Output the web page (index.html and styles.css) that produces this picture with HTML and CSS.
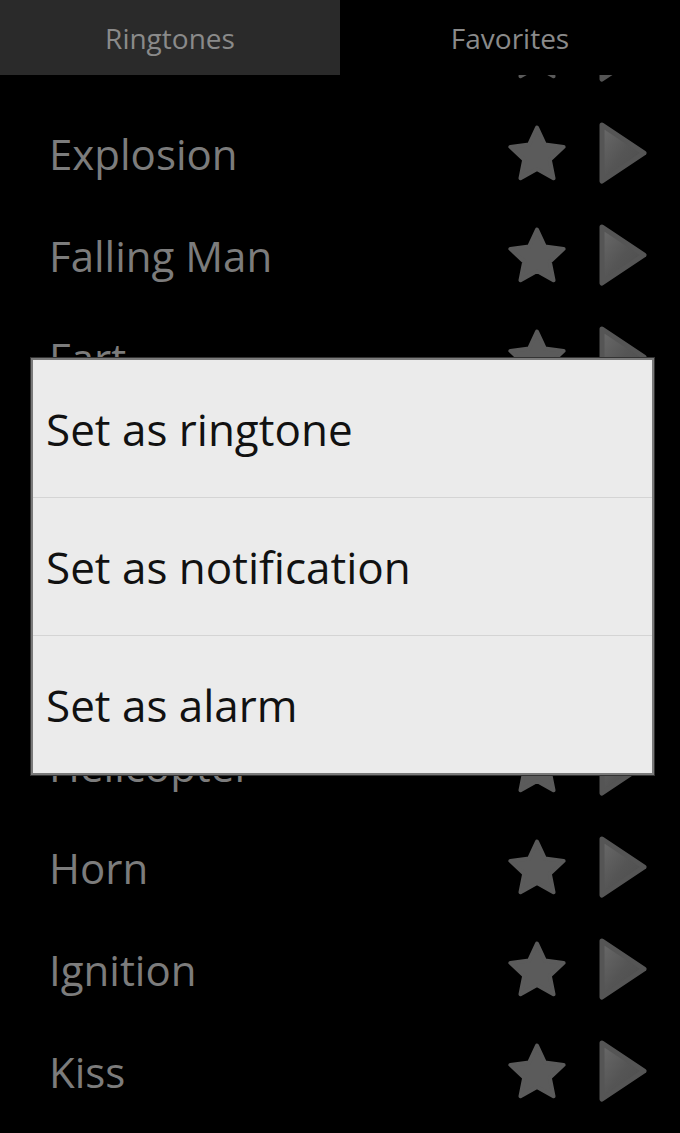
FILE: index.html
```html
<!DOCTYPE html>
<html lang="en">
<head>
  <meta charset="UTF-8" />
  <meta name="viewport" content="width=device-width, initial-scale=1.0"/>
  <title>Ringtones</title>
  <link rel="stylesheet" href="styles.css">
</head>
<body>

  <svg width="0" height="0" class="defs">
    <defs>
      <linearGradient id="playGrad" x1="0" y1="0" x2="1" y2="1">
        <stop offset="0" stop-color="#6a6a6a"/>
        <stop offset="0.5" stop-color="#555"/>
        <stop offset="1" stop-color="#4c4c4c"/>
      </linearGradient>
      <symbol id="star" viewBox="0 0 60 56">
        <polygon points="30,2.5 37.9,19.6 56.6,21.9 42.8,34.7 46.5,53.2 30,44 13.5,53.2 17.2,34.7 3.4,21.9 22.1,19.6"
          fill="#5b5b5b" stroke="#5b5b5b" stroke-width="4" stroke-linejoin="round"/>
      </symbol>
      <symbol id="play" viewBox="0 0 50 64">
        <polygon points="4,4 46,32 4,60" fill="url(#playGrad)" stroke="#555" stroke-width="5" stroke-linejoin="round"/>
      </symbol>
    </defs>
  </svg>

  <div class="tabs">
    <div class="tab active">Ringtones</div>
    <div class="tab">Favorites</div>
  </div>

  <div class="list-view">
    <ul class="list">
      <li class="row"><span class="name">Drums</span><span class="actions"><svg class="star"><use href="#star"/></svg><svg class="play"><use href="#play"/></svg></span></li>
      <li class="row"><span class="name">Explosion</span><span class="actions"><svg class="star"><use href="#star"/></svg><svg class="play"><use href="#play"/></svg></span></li>
      <li class="row"><span class="name">Falling Man</span><span class="actions"><svg class="star"><use href="#star"/></svg><svg class="play"><use href="#play"/></svg></span></li>
      <li class="row"><span class="name">Fart</span><span class="actions"><svg class="star"><use href="#star"/></svg><svg class="play"><use href="#play"/></svg></span></li>
      <li class="row"><span class="name">Glass</span><span class="actions"><svg class="star"><use href="#star"/></svg><svg class="play"><use href="#play"/></svg></span></li>
      <li class="row"><span class="name">Gunshot</span><span class="actions"><svg class="star"><use href="#star"/></svg><svg class="play"><use href="#play"/></svg></span></li>
      <li class="row"><span class="name">Hammer</span><span class="actions"><svg class="star"><use href="#star"/></svg><svg class="play"><use href="#play"/></svg></span></li>
      <li class="row"><span class="name">Helicopter</span><span class="actions"><svg class="star"><use href="#star"/></svg><svg class="play"><use href="#play"/></svg></span></li>
      <li class="row"><span class="name">Horn</span><span class="actions"><svg class="star"><use href="#star"/></svg><svg class="play"><use href="#play"/></svg></span></li>
      <li class="row"><span class="name">Ignition</span><span class="actions"><svg class="star"><use href="#star"/></svg><svg class="play"><use href="#play"/></svg></span></li>
      <li class="row"><span class="name">Kiss</span><span class="actions"><svg class="star"><use href="#star"/></svg><svg class="play"><use href="#play"/></svg></span></li>
    </ul>
  </div>

  <div class="menu">
    <div class="menu-item">Set as ringtone</div>
    <div class="menu-item">Set as notification</div>
    <div class="menu-item">Set as alarm</div>
  </div>

</body>
</html>
```

FILE: styles.css
```css
body {
  margin: 0;
  padding: 0;
  background-color: #000;
  font-family: "Open Sans", "DejaVu Sans", sans-serif;
  height: 1133px;
  overflow: hidden;
  position: relative;
}

.defs {
  position: absolute;
}

.tabs {
  display: flex;
  height: 75px;
}

.tab {
  flex: 1;
  display: flex;
  align-items: center;
  justify-content: center;
  color: #8a8a8a;
  font-size: 28px;
  background-color: #000;
}

.tab.active {
  background-color: #2a2a2a;
}

.list-view {
  height: 1058px;
  overflow: hidden;
}

.list {
  list-style: none;
  margin: -75px 0 0 0;
  padding: 0;
}

.row {
  height: 102px;
  display: flex;
  align-items: center;
  justify-content: space-between;
  padding: 0 32px 0 49px;
}

.name {
  color: #7c7c7c;
  font-size: 42px;
}

.actions {
  display: flex;
  align-items: center;
  gap: 31px;
}

.star {
  width: 60px;
  height: 56px;
}

.play {
  width: 50px;
  height: 64px;
}

.menu {
  position: absolute;
  top: 358px;
  left: 31px;
  width: 619px;
  background-color: #ebebeb;
  border: 2px solid #7a7a7a;
  box-shadow: 0 0 0 1px #333;
}

.menu-item {
  height: 137px;
  display: flex;
  align-items: center;
  padding-left: 13px;
  color: #111;
  font-size: 44px;
  border-top: 1px solid #d4d4d4;
}

.menu-item:first-child {
  border-top: none;
}
```
